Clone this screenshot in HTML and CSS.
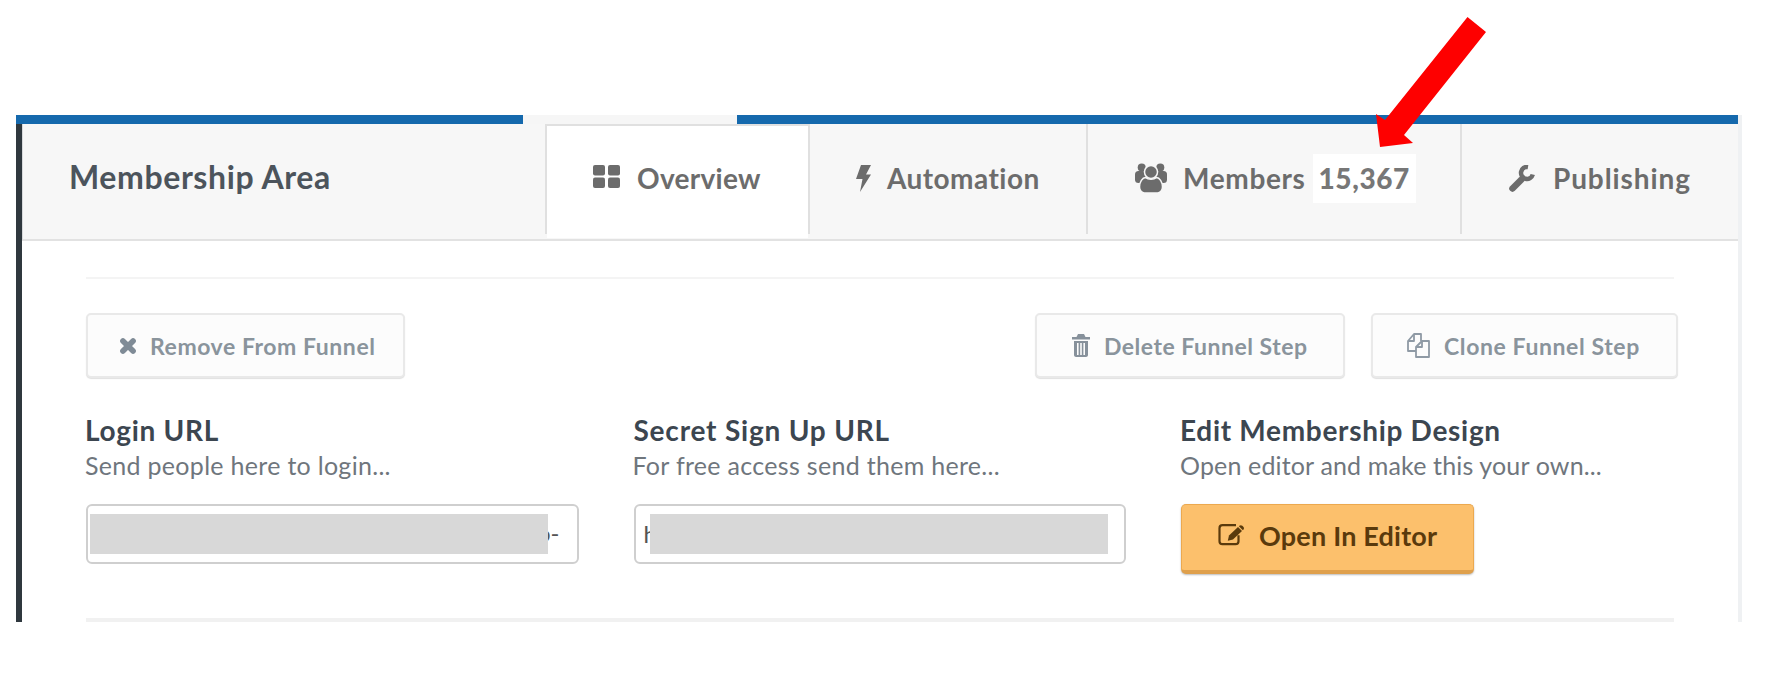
FILE: index.html
```html
<!DOCTYPE html>
<html lang="en">
<head>
<meta charset="utf-8">
<title>Membership Area</title>
<link rel="stylesheet" href="styles.css">
</head>
<body>
<svg class="arrow" viewBox="0 0 1782 694" aria-hidden="true"><polygon points="1467.5,17 1486,32 1404,135 1413,143 1380,147 1376,114 1385,120" fill="#fe0000"/></svg>
<div class="frame">
  <div class="topbar"><div class="blue-a"></div><div class="gap"></div><div class="blue-b"></div></div>
  <div class="main">
    <header class="head">
      <h1 class="title">Membership Area</h1>
      <nav class="tabs">
        <a class="tab tab-overview">
          <svg class="ic ic-grid" viewBox="0 0 27 23"><rect x="0" y="0" width="12" height="10.5" rx="2"/><rect x="15" y="0" width="12" height="10.5" rx="2"/><rect x="0" y="12.5" width="12" height="10.5" rx="2"/><rect x="15" y="12.5" width="12" height="10.5" rx="2"/></svg>
          <span>Overview</span>
        </a>
        <a class="tab tab-automation">
          <svg class="ic ic-bolt" viewBox="0 0 15 27"><polygon points="5,0 15,0 10,9.500 15,9.500 4,27 6.500,14 0,14"/></svg>
          <span>Automation</span>
        </a>
        <a class="tab tab-members">
          <svg class="ic ic-users" viewBox="0 0 32 30"><circle cx="6.700" cy="4.500" r="4"/><circle cx="25.300" cy="4.500" r="4"/><rect x="0" y="8" width="11" height="12" rx="3.500"/><rect x="21" y="8" width="11" height="12" rx="3.500"/><circle class="halo" cx="16" cy="9" r="6.500"/><path class="halo" d="M4.500 24c0-5 3-9.500 6-9.500 1.500 1.200 3.500 1.700 5.500 1.700s4-.5 5.500-1.700c3 0 6 4.500 6 9.500 0 3.500-2.500 6-5 6H9.500c-2.500 0-5-2.500-5-6z"/></svg>
          <span>Members</span>
          <span class="count">15,367</span>
        </a>
        <a class="tab tab-publishing">
          <svg class="ic ic-wrench" viewBox="0 0 26 27"><path class="w-handle" d="M3.500 23.500 12.500 14.500"/><path class="w-head" d="M19 2A6 6 0 1 0 23.800 9.500"/></svg>
          <span>Publishing</span>
        </a>
      </nav>
    </header>
    <section class="content">
      <hr class="rule-thin">
      <div class="actions">
        <button class="btn btn-remove">
          <svg class="ic ic-x" viewBox="0 0 16 16"><path d="M3.500 3.500 12.500 12.500M12.500 3.500 3.500 12.500"/></svg>
          <span>Remove From Funnel</span>
        </button>
        <div class="actions-right">
          <button class="btn btn-delete">
            <svg class="ic ic-trash" viewBox="0 0 18 23"><path d="M6 0h6l1.500 3H18v2.500H0V3h4.500z"/><path fill-rule="evenodd" d="M2 7h14v14c0 1-1 2-2 2H4c-1 0-2-1-2-2zM5 9v12h1.600V9zM8.200 9v12h1.600V9zM11.400 9v12H13V9z"/></svg>
            <span>Delete Funnel Step</span>
          </button>
          <button class="btn btn-clone">
            <svg class="ic ic-clone" viewBox="0 0 23 25"><path d="M9 18H1V8L7 1h7v7"/><path d="M1 8h6V1"/><path d="M9 14 15 8h7v16H9z"/><path d="M9 14h6V8"/></svg>
            <span>Clone Funnel Step</span>
          </button>
        </div>
      </div>
      <div class="cols">
        <div class="col">
          <h2 class="label">Login URL</h2>
          <p class="hint">Send people here to login...</p>
          <div class="field field-login"><span class="field-text">o-</span><div class="redact"></div></div>
        </div>
        <div class="col">
          <h2 class="label label-mid">Secret Sign Up URL</h2>
          <p class="hint">For free access send them here...</p>
          <div class="field field-secret"><span class="field-text">h</span><div class="redact"></div></div>
        </div>
        <div class="col">
          <h2 class="label">Edit Membership Design</h2>
          <p class="hint hint-tight">Open editor and make this your own...</p>
          <button class="btn-editor">
            <svg class="ic ic-edit" viewBox="0 0 28 22"><path class="line" d="M18 1.200H4.500a3 3 0 0 0-3 3v13a3 3 0 0 0 3 3h13a3 3 0 0 0 3-3v-6"/><path d="M11 11.500 20 3l4 4-9 8.500-5.200 1.200z"/><path d="M21.300 1.800c1-.9 2-.9 3 0l1 1c.9 1 .9 2 0 3l-.4.400-4-4z"/></svg>
            <span>Open In Editor</span>
          </button>
        </div>
      </div>
      <hr class="rule-thick">
    </section>
  </div>
</div>
</body>
</html>
```
FILE: styles.css
```css
* { box-sizing: border-box; }
html, body { margin: 0; padding: 0; background: #fff; }
body {
  width: 1782px;
  height: 694px;
  overflow: hidden;
  position: relative;
  font-family: Lato, "Open Sans", sans-serif;
}
.arrow { position: absolute; left: 0; top: 0; width: 1782px; height: 694px; z-index: 5; }
.frame {
  margin: 115px 0 0 16px;
  width: 1726px;
  height: 507px;
  border-right: 4px solid #eff1f3;
  display: flex;
  flex-direction: column;
}
.topbar { display: flex; height: 9px; flex: none; }
.blue-a { width: 507px; background: #1569ad; }
.gap { width: 214px; background: #f6f6f6; }
.blue-b { flex: 1; background: #1569ad; }
.main {
  flex: 1;
  border-left: 6px solid #2f383e;
  display: flex;
  flex-direction: column;
  min-height: 0;
}
.head {
  flex: none;
  height: 117px;
  background: #f7f7f7;
  border-bottom: 2px solid #e2e2e2;
  border-left: 1px solid #d8dadc;
  display: flex;
  align-items: flex-start;
}
.title {
  width: 522px;
  margin: 0;
  padding: 33px 0 0 46px;
  font-size: 32px;
  line-height: 40px;
  font-weight: 700;
  letter-spacing: 0.6px;
  color: #4c545c;
}
.tabs { display: flex; flex: 1; height: 110px; }
.tab {
  position: relative;
  display: flex;
  align-items: flex-start;
  height: 110px;
  padding-top: 37px;
  border-right: 2px solid #e0e0e0;
  font-size: 28px;
  line-height: 34px;
  font-weight: 700;
  letter-spacing: 0.45px;
  color: #6c6c6c;
}
.tab-overview {
  width: 265px;
  padding-left: 46px;
  background: #fff;
  border-top: 2px solid #e0e0e0;
  border-left: 2px solid #e0e0e0;
  padding-top: 35px;
  letter-spacing: 0.3px;
}
.tab-overview::after {
  content: "";
  position: absolute;
  left: 0;
  right: 0;
  bottom: -4px;
  height: 4px;
  background: #fff;
}
.tab-automation { width: 278px; padding-left: 46px; }
.tab-members { width: 374px; padding-left: 47px; letter-spacing: 0.65px; }
.tab-publishing { border-right: none; flex: 1; padding-left: 47px; letter-spacing: 0.9px; }
.ic { display: block; flex: none; fill: currentColor; }
.ic-grid { width: 27px; height: 23px; margin: 4px 17px 0 0; fill: #6c6c6c; }
.ic-bolt { width: 15px; height: 27px; margin: 4px 16px 0 0; }
.ic-users { width: 32px; height: 30px; margin: 2px 16px 0 0; }
.ic-users .halo { stroke: #f7f7f7; stroke-width: 1.500; }
.ic-wrench { width: 26px; height: 27px; margin: 4px 18px 0 0; fill: none; stroke: currentColor; }
.w-handle { stroke-width: 6.500; stroke-linecap: round; }
.w-head { stroke-width: 4.500; }
.count {
  position: relative;
  margin: -7px 0 0 7px;
  padding: 7px 6px 6px;
  height: 49px;
  background: #fff;
  color: #777;
  font-size: 28px;
  font-weight: 900;
  letter-spacing: 0.6px;
}
.content {
  flex: 1;
  padding: 36px 0 0 64px;
  width: 1652px;
}
.rule-thin { margin: 0; border: 0; height: 2px; background: #f4f4f4; }
.actions {
  display: flex;
  justify-content: space-between;
  margin: 34px -4px 0 0;
}
.actions-right { display: flex; gap: 26px; }
.btn {
  display: flex;
  align-items: center;
  height: 65px;
  padding: 0;
  background: #fcfcfc;
  border: 2px solid #e9e9e9;
  border-radius: 5px;
  box-shadow: 0 1px 1px #e0e0e0;
  color: #8a949c;
  font-family: inherit;
  font-size: 23px;
  letter-spacing: 0.55px;
  font-weight: 700;
}
.btn-remove { width: 319px; padding-left: 31px; }
.btn-delete { width: 310px; padding-left: 35px; letter-spacing: 0.5px; }
.btn-clone { width: 307px; padding-left: 34px; letter-spacing: 0.6px; }
.ic-x { width: 18px; height: 18px; margin-right: 13px; fill: none; stroke: #7f8b96; stroke-width: 5; stroke-linecap: round; }
.ic-trash { width: 18px; height: 23px; margin-right: 14px; fill: #87919b; }
.ic-clone { width: 23px; height: 25px; margin-right: 14px; fill: none; stroke: #8f9aa5; stroke-width: 1.800; stroke-linejoin: round; }
.cols { display: grid; grid-template-columns: repeat(3, 492px); column-gap: 55.5px; margin-top: 35px; }
.label {
  margin: 0 0 0 -1px;
  font-size: 28px;
  line-height: 34px;
  font-weight: 700;
  letter-spacing: 0.7px;
  color: #3c4650;
}
.label-mid { margin-left: 0; letter-spacing: 0.8px; }
.hint {
  margin: 3px 0 0 -1px;
  font-size: 25px;
  line-height: 30px;
  font-weight: 400;
  letter-spacing: 0.3px;
  color: #6f767d;
}
.hint-tight { letter-spacing: 0.15px; }
.field {
  position: relative;
  margin-top: 24px;
  height: 60px;
  background: #fff;
  border: 2px solid #cfcfcf;
  border-radius: 6px;
  color: #555;
  font-size: 24px;
  line-height: 56px;
  overflow: hidden;
}
.field-text { position: absolute; }
.field-login { margin-right: -1px; }
.field-login .field-text { left: 449px; top: -1px; }
.field-secret .field-text { left: 8px; }
.redact { position: absolute; top: 8px; height: 40px; background: #d8d8d8; }
.field-login .redact { left: 2px; width: 458px; }
.field-secret .redact { left: 14px; width: 458px; }
.btn-editor {
  display: flex;
  align-items: center;
  margin-top: 24px;
  width: 293px;
  height: 70px;
  padding: 0 0 5px 36px;
  background: #fcc06c;
  border: 1px solid #eca94f;
  border-bottom: 4px solid #dfa04c;
  border-radius: 5px;
  box-shadow: 0 1px 2px #bbb;
  color: #5a3a0c;
  font-family: inherit;
  font-size: 27px;
  letter-spacing: 0.2px;
  font-weight: 700;
}
.ic-edit { width: 28px; height: 22px; margin-right: 13px; }
.ic-edit .line { fill: none; stroke: #5a3a0c; stroke-width: 2.200; }
.rule-thick { margin: 44px 0 0; border: 0; height: 4px; background: #f1f1f1; }
```
